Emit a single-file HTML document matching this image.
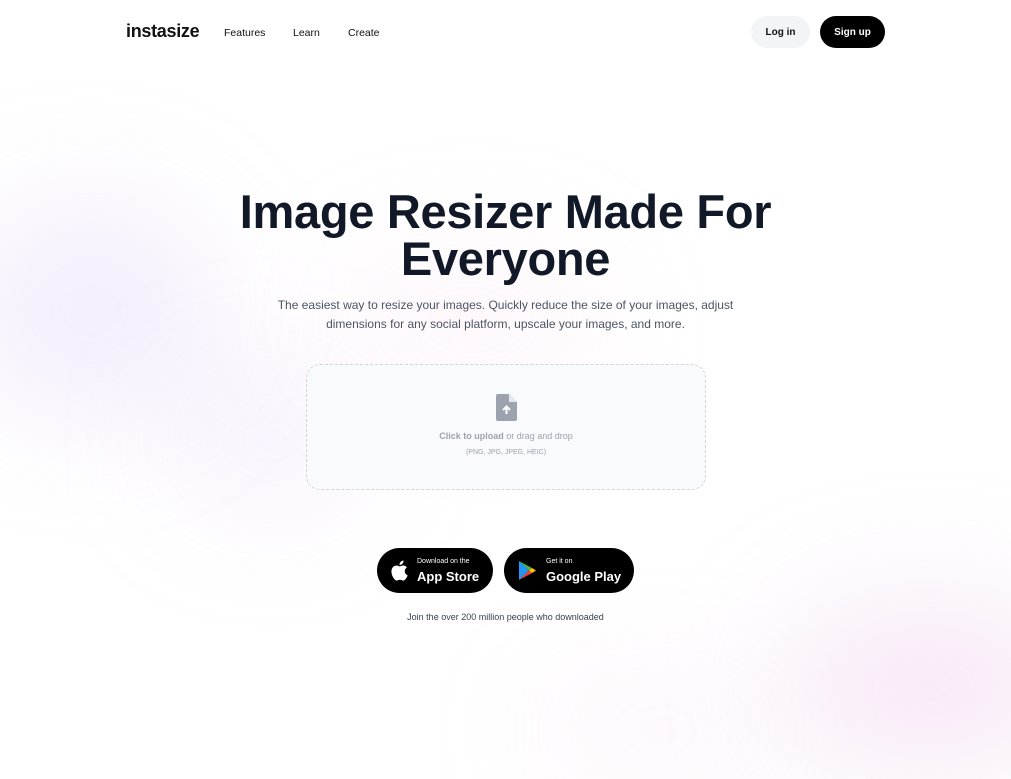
<!DOCTYPE html>
<html><head><meta charset="utf-8"><style>
*{margin:0;padding:0;box-sizing:border-box}
html,body{width:1011px;height:779px;overflow:hidden}
body{background:#fff;font-family:"Liberation Sans",sans-serif;position:relative;color:#111827}
.bg{position:absolute;left:0;top:0;width:1011px;height:779px;overflow:hidden}
.blob{position:absolute;border-radius:50%;filter:blur(60px)}
.nav{position:absolute;top:0;left:0;width:100%;height:64px}
.logo{position:absolute;left:126px;top:21px;font-weight:bold;font-size:18px;letter-spacing:-0.3px;color:#111}
.nl{position:absolute;top:27px;font-size:10.5px;color:#111}
.btn{position:absolute;top:16px;height:32px;border-radius:16px;font-size:10px;font-weight:bold;display:flex;align-items:center;justify-content:center}
h1{position:absolute;top:188px;left:0;width:1011px;text-align:center;font-size:47px;line-height:47px;font-weight:900;color:#111827;letter-spacing:-0.3px}
.sub{position:absolute;top:296px;width:1011px;text-align:center;font-size:12px;line-height:19px;color:#4b5563}
.drop{position:absolute;left:306px;top:364px;width:400px;height:126px;border:1px dashed #d1d5db;border-radius:14px;background:#f9fafb}
.store{position:absolute;top:548px;height:45px;background:#000;border-radius:23px;color:#fff}
</style></head><body>
<div class="bg">
<div class="blob" style="left:-40px;top:200px;width:260px;height:220px;background:rgba(200,170,240,.2)"></div>
<div class="blob" style="left:170px;top:370px;width:200px;height:140px;background:rgba(210,180,245,.18)"></div>
<div class="blob" style="left:340px;top:260px;width:260px;height:120px;background:rgba(250,200,225,.18)"></div>
<div class="blob" style="left:780px;top:600px;width:300px;height:170px;background:rgba(230,180,230,.3)"></div>
<div class="blob" style="left:540px;top:690px;width:240px;height:80px;background:rgba(240,190,225,.2)"></div>
</div>
<div class="nav">
<div class="logo">instasize</div>
<div class="nl" style="left:224px">Features</div>
<div class="nl" style="left:293px">Learn</div>
<div class="nl" style="left:348px">Create</div>
<div class="btn" style="left:751px;width:59px;background:#f3f4f6;color:#111">Log in</div>
<div class="btn" style="left:820px;width:65px;background:#000;color:#fff">Sign up</div>
</div>
<h1>Image Resizer Made For<br>Everyone</h1>
<div class="sub">The easiest way to resize your images. Quickly reduce the size of your images, adjust<br>dimensions for any social platform, upscale your images, and more.</div>
<div class="drop">
<svg style="position:absolute;left:189px;top:29px" width="21" height="27" viewBox="0 0 21 27"><path d="M2 0h11l8 8v17a2 2 0 0 1-2 2H2a2 2 0 0 1-2-2V2a2 2 0 0 1 2-2z" fill="#9ca3af"/><path d="M13 0v8h8z" fill="#e5e7eb"/><path d="M10.5 20v-7M7 16l3.5-3.5L14 16" stroke="#fff" stroke-width="2" fill="none"/></svg>
<div style="position:absolute;top:66px;width:100%;text-align:center;font-size:9px;color:#9ca3af"><b>Click to upload</b> or drag and drop</div>
<div style="position:absolute;top:84px;width:100%;text-align:center;font-size:7px;color:#9ca3af">(PNG, JPG, JPEG, HEIC)</div>
</div>
<div class="store" style="left:377px;width:116px">
<svg style="position:absolute;left:13px;top:12px" width="18" height="21" viewBox="0 0 17 20"><path d="M14 10.6c0-2.4 2-3.5 2-3.6-1.1-1.6-2.8-1.8-3.4-1.8-1.4-.1-2.8.9-3.5.9s-1.9-.9-3.1-.8C4.4 5.3 2.9 6.2 2.1 7.6.4 10.5 1.7 14.8 3.3 17.2c.8 1.1 1.8 2.4 3 2.4 1.2-.1 1.7-.8 3.1-.8s1.9.8 3.1.8c1.3 0 2.1-1.2 2.9-2.3.9-1.3 1.3-2.6 1.3-2.7 0 0-2.700-1-2.700-4z M11.8 3.5c.6-.8 1.1-1.9 1-3-1 0-2.1.7-2.8 1.4-.6.7-1.1 1.8-1 2.9 1 .1 2.1-.5 2.8-1.3z" fill="#fff"/></svg>
<div style="position:absolute;left:40px;top:10px;font-size:7px">Download on the</div>
<div style="position:absolute;left:40px;top:21px;font-size:13px;font-weight:bold">App Store</div>
</div>
<div class="store" style="left:504px;width:130px">
<svg style="position:absolute;left:14px;top:12px" width="19" height="21" viewBox="0 0 19 21"><path d="M1 1l10 9.5L1 20z" fill="#2196f3"/><path d="M1 1l13 7-3 2.5z" fill="#4caf50"/><path d="M1 20l13-7-3-2.5z" fill="#f44336"/><path d="M14 8l4 2.5-4 2.5-3-2.5z" fill="#ffc107"/></svg>
<div style="position:absolute;left:42px;top:10px;font-size:7px">Get it on</div>
<div style="position:absolute;left:42px;top:21px;font-size:13px;font-weight:bold">Google Play</div>
</div>
<div style="position:absolute;top:612px;width:1011px;text-align:center;font-size:9px;color:#374151">Join the over 200 million people who downloaded</div>
</body></html>
